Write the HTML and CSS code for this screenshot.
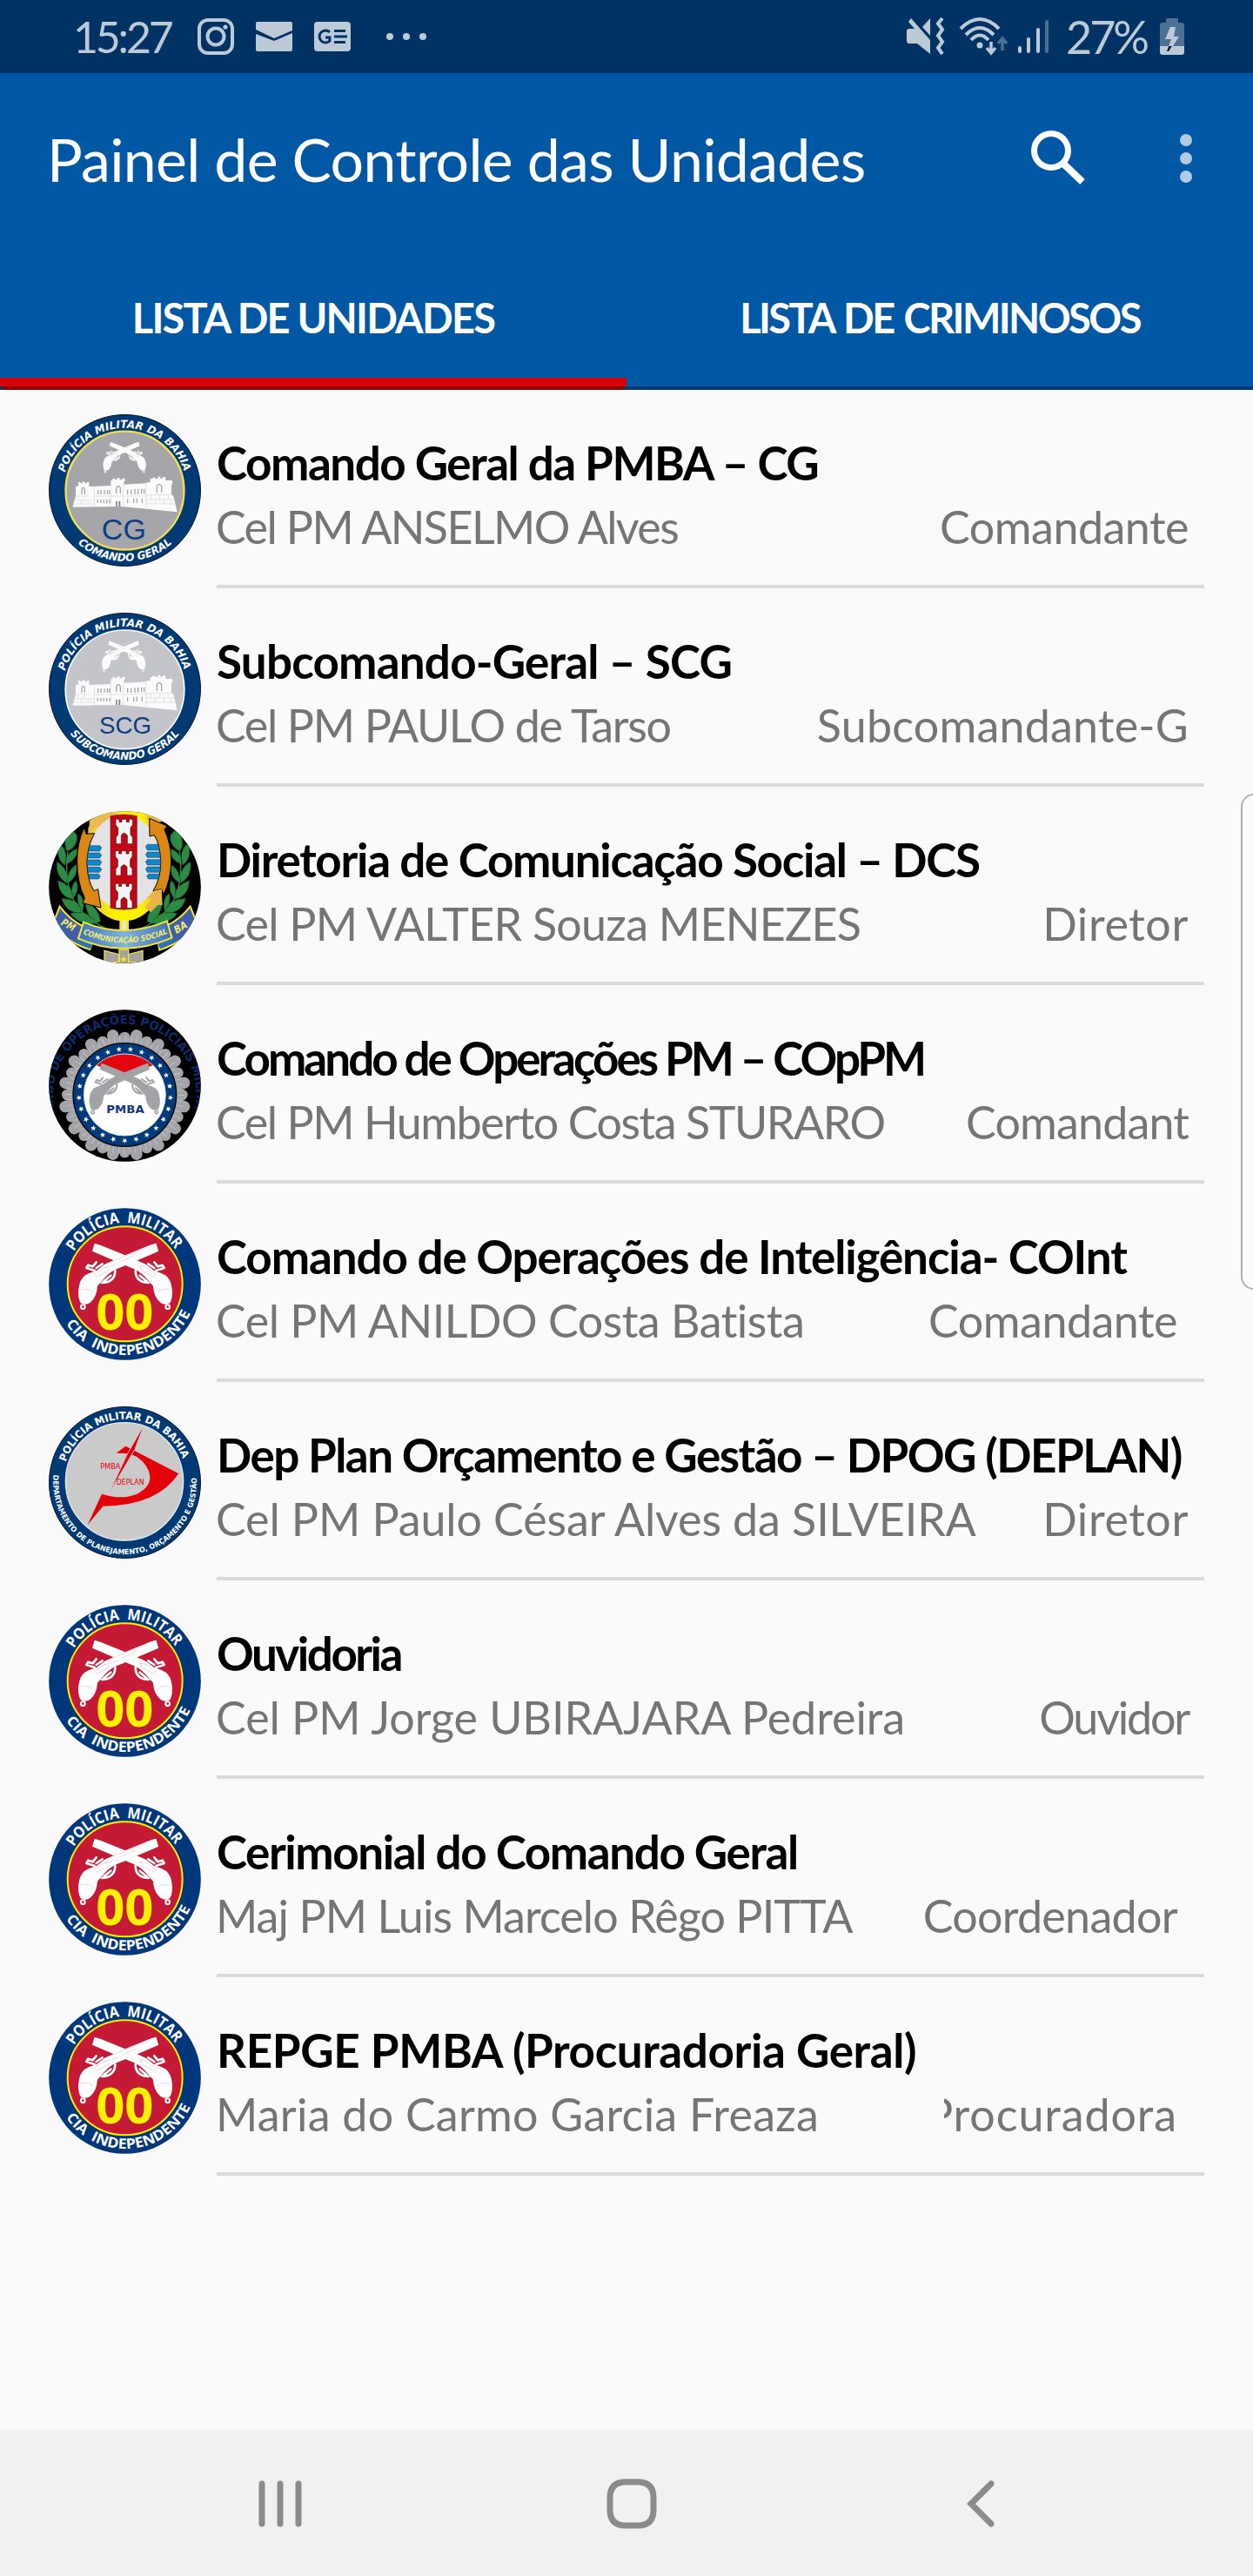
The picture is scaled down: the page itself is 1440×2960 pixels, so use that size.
FILE: index.html
```html
<!DOCTYPE html>
<html lang="pt-BR">
<head>
<meta charset="utf-8">
<title>Painel de Controle das Unidades</title>
<link rel="stylesheet" href="styles.css">
</head>
<body>
<svg class="defs" width="0" height="0" aria-hidden="true">
  <defs>
    <symbol id="pistols" viewBox="145 155 335 240" preserveAspectRatio="none">
      <g id="pistol">
        <path d="M418 161L426 188 303 241Q262 256 244 277L216 308Q214 345 191 365 176 376 158 367 147 345 151 318 154 286 172 272 190 262 212 256L240 234 300 207 396 168Z" fill="currentColor"/>
        <path d="M277 256Q276 296 231 297M262 272L238 292M206 255L178 246 184 236 200 241 212 226M212 246L233 232" fill="none" stroke="currentColor" stroke-width="8" stroke-linecap="round" stroke-linejoin="round"/>
        <circle cx="166" cy="380" r="7" fill="none" stroke="currentColor" stroke-width="6"/>
        <path class="engrave" d="M158 322Q185 312 201 332M205 268L214 276 250 258 262 240 240 245ZM262 224L384 176M300 222L350 200" fill="none" stroke-width="2"/>
      </g>
      <g transform="translate(624 0) scale(-1 1)">
        <path d="M418 161L426 188 303 241Q262 256 244 277L216 308Q214 345 191 365 176 376 158 367 147 345 151 318 154 286 172 272 190 262 212 256L240 234 300 207 396 168Z" fill="currentColor"/>
        <path d="M277 256Q276 296 231 297M262 272L238 292M206 255L178 246 184 236 200 241 212 226M212 246L233 232" fill="none" stroke="currentColor" stroke-width="8" stroke-linecap="round" stroke-linejoin="round"/>
        <circle cx="166" cy="380" r="7" fill="none" stroke="currentColor" stroke-width="6"/>
        <path class="engrave" d="M158 322Q185 312 201 332M205 268L214 276 250 258 262 240 240 245Z" fill="none" stroke-width="2"/>
      </g>
      <path d="M418 161L426 188 303 241 262 256 240 234 300 207 396 168Z" fill="currentColor"/>
      <path class="engrave" d="M262 224L384 176M300 222L350 200M240 245L262 240 290 230" fill="none" stroke-width="2"/>
    </symbol>

    <symbol id="castle" viewBox="125 260 370 130">
      <path d="M130 368L141 330V296H150V282H157V286H164V280H172V286H180V281H187V297H196L262 294V276H268V270H277V274H284V268H293V274H301V269H311V279H307V290L385 286V283H398V270H406V266H416V270H424V263H433V269H441V265H451V276H474V290H471V325L478 330 491 385 300 366Z" fill="#fbfbfb"/>
      <path d="M142 330H186M134 345H205M131 357H205M205 330H385M385 326H476M382 342H481M380 357H486M205 297V366M262 294V366M305 292V366M384 288V370M150 330V345M170 330V345M160 345V357M184 345V357M400 326V342M430 326V342M460 328V343M415 342V357M445 343V360M470 343V360" stroke="#cbc8cb" stroke-width="1.5" fill="none"/>
      <g fill="none" stroke="#a9a4ab" stroke-width="4">
        <path d="M162 324V306Q167 296 172 306V324M281 322V302Q288 290 295 302V322M421 318V296Q429 282 437 296V318"/>
        <path d="M218 324V310M228 324V310M240 324V310M250 324V310M257 324V310M320 324V308M332 324V308M345 324V306M356 324V306M368 322V305M377 322V305"/>
        <path d="M217 354V342M228 354V342M238 354V342M248 354V342M258 354V342M320 354V340M341 354V338M352 354V338M370 354V338"/>
      </g>
      <path d="M279 366V347H284V366M289 366V347H295V366" fill="#888490"/>
    </symbol>

    <symbol id="emblem-cg" viewBox="48 48 525 525">
      <circle cx="310.500" cy="310.500" r="261" fill="#003a75" stroke="#0a1320" stroke-width="3"/>
      <circle cx="310.500" cy="311" r="204" fill="#a5a5aa" stroke="#f5df4e" stroke-width="7"/>
      <path id="cg-top" d="M104 249A215 215 0 0 1 517 252" fill="none"/>
      <path id="cg-bottom" d="M148 493A244 244 0 0 0 478 488" fill="none"/>
      <text class="ring oblique" font-size="37"><textPath href="#cg-top" textLength="548" lengthAdjust="spacingAndGlyphs">POLÍCIA MILITAR DA BAHIA</textPath></text>
      <text class="ring oblique" font-size="37"><textPath href="#cg-bottom" textLength="356" lengthAdjust="spacingAndGlyphs">COMANDO GERAL</textPath></text>
      <use href="#pistols" x="233" y="141" width="153" height="112" color="#fff"/>
      <use href="#castle" x="125" y="260" width="370" height="130"/>
      <text class="code" x="307" y="480" font-size="102">CG</text>
    </symbol>

    <symbol id="emblem-scg" viewBox="48 42 525 525">
      <circle cx="310.500" cy="304.500" r="261" fill="#003a75" stroke="#0a1320" stroke-width="3"/>
      <circle cx="310.500" cy="307" r="205" fill="#c4c5ca" stroke="#fafafa" stroke-width="5"/>
      <path id="scg-top" d="M104 243A215 215 0 0 1 517 246" fill="none"/>
      <path id="scg-bottom" d="M122 460A245 245 0 0 0 505 453" fill="none"/>
      <text class="ring oblique" font-size="37"><textPath href="#scg-top" textLength="548" lengthAdjust="spacingAndGlyphs">POLÍCIA MILITAR DA BAHIA</textPath></text>
      <text class="ring oblique" font-size="37"><textPath href="#scg-bottom" textLength="430" lengthAdjust="spacingAndGlyphs">SUBCOMANDO GERAL</textPath></text>
      <use href="#pistols" x="229" y="137" width="155" height="112" color="#fff"/>
      <use href="#castle" x="125" y="254" width="370" height="130"/>
      <text class="code" x="312" y="460" font-size="83">SCG</text>
    </symbol>

    <clipPath id="dcs-clip"><circle cx="310.500" cy="313.500" r="262"/></clipPath>
    <linearGradient id="gold" x1="0" x2="1"><stop offset="0" stop-color="#e8b65c"/><stop offset=".4" stop-color="#fff200"/><stop offset=".7" stop-color="#fff200"/><stop offset="1" stop-color="#e8a440"/></linearGradient>
    <linearGradient id="ribbon" x1="0" x2="1"><stop offset="0" stop-color="#3c74b8"/><stop offset=".5" stop-color="#7fb2dc"/><stop offset="1" stop-color="#3c6fb5"/></linearGradient>
    <symbol id="tower" viewBox="0 0 60 88">
      <path d="M1 2H13V12H22V2H38V12H47V2H59V22L52 32V56L59 64V87H41V58Q30 42 20 58V87H2V64L9 56V32L1 22Z" fill="#f4f4f4" stroke="#36151a" stroke-width="2"/>
    </symbol>
    <symbol id="laurel" viewBox="60 90 190 370">
      <g fill="#2c8a45" stroke="#123d1c" stroke-width="1.500">
        <path d="M112 190Q92 160 120 115Q150 125 146 150Q140 178 112 190Z"/>
        <path d="M104 238Q70 215 82 160Q108 178 108 210ZM106 236Q105 195 146 180Q152 215 106 236Z"/>
        <path d="M110 300Q70 275 76 226Q108 245 112 275ZM112 300Q110 255 144 235Q150 280 112 300Z"/>
        <path d="M130 355Q82 345 80 290Q122 305 130 335ZM130 355Q120 310 142 290Q158 320 130 355Z"/>
        <path d="M160 402Q108 405 92 352Q145 355 160 385ZM162 402Q140 355 150 334Q180 360 162 402Z"/>
        <path d="M205 440Q150 442 122 404Q170 390 205 425ZM205 440Q170 390 176 362Q225 390 226 432Z"/>
      </g>
      <path d="M114 190Q95 330 165 400 205 440 245 455" fill="none" stroke="#2c8a45" stroke-width="4"/>
    </symbol>
    <symbol id="emblem-dcs" viewBox="48 51 525 525">
      <g clip-path="url(#dcs-clip)">
        <rect x="48" y="51" width="525" height="525"/>
        <use href="#laurel" x="60" y="90" width="190" height="370"/>
        <use href="#laurel" x="60" y="90" width="190" height="370" transform="translate(613 0) scale(-1 1)"/>
        <ellipse cx="307" cy="226" rx="150" ry="204" fill="url(#gold)"/>
        <path d="M184 86V138L150 152V90ZM392 76L455 92 452 130 400 118Z" fill="#000"/>
        <path d="M188 84V130L208 105 238 108 234 92 290 55H230ZM386 56L450 84 420 92 386 80Z" fill="#e9b950"/>
        <ellipse cx="306" cy="226" rx="127" ry="163" fill="#e3e3e6"/>
        <path d="M170 108L177 130 206 128Q181 170 180 230 181 290 204 326L218 320 228 384 165 368 172 350Q146 300 146 222 146 160 170 108Z" fill="#d98816" stroke="#000" stroke-width="3"/>
        <path d="M395 76L456 102 447 115Q470 165 470 222 470 285 444 338L437 320 408 326Q434 285 434 226 432 165 412 134L396 138Z" fill="#d98816" stroke="#000" stroke-width="3"/>
        <path d="M410 326L437 320 440 376 425 374 400 400 380 384 405 350 384 353Z" fill="#e9b44a"/>
        <path d="M261 68Q306 58 352 68V385Q306 396 261 385Z" fill="#c20613" stroke="#5b2126" stroke-width="2"/>
        <use href="#tower" x="278" y="77" width="60" height="88"/>
        <use href="#tower" x="277" y="186" width="60" height="88"/>
        <use href="#tower" x="277" y="297" width="60" height="91"/>
        <g fill="#0d87cc" stroke="#1c2b3a" stroke-width="1.500">
          <path d="M188 170H224L230 177 224 189H184ZM182 195H224L230 203 224 213H181ZM180 219H224L230 227 224 238H180ZM181 244H224L230 252 224 262H183ZM184 268H220L226 276 220 285H188Z"/>
          <path d="M425 166H388L382 174 388 186H430ZM432 192H388L382 200 388 211H433ZM434 218H388L382 226 388 237H434ZM433 243H388L382 251 388 262H432ZM430 268H392L386 276 392 285H427Z"/>
        </g>
        <path d="M292 428H324V470H292Z" fill="#f6e532"/><path d="M302 428H314V470H302Z" fill="#e8e8e8"/>
        <path d="M240 532L290 545V570L240 578ZM372 532L322 545V570L372 578Z" fill="#a5a2a2" stroke="#f6e532" stroke-width="4"/>
        <rect x="291" y="528" width="32" height="50" fill="#a5a2a2" stroke="#f6e532" stroke-width="4"/>
        <path d="M306 549L309 558H318L311 564 314 573 306 567 298 573 301 564 294 558H303Z" fill="#f6e532"/>
        <path d="M86 380Q120 425 166 448L150 490 196 510 190 528Q110 505 62 440ZM536 380Q500 425 456 445L472 485 426 508 430 530Q520 500 560 440Z" fill="#3f5fa8" stroke="#f6e532" stroke-width="6"/>
        <path d="M150 488L200 512 190 526 145 505ZM472 484L424 508 432 526 478 500Z" fill="#2d74bb"/>
        <path d="M168 434Q306 492 456 430L472 488Q306 560 150 490Z" fill="url(#ribbon)" stroke="#f6e532" stroke-width="6"/>
        <path id="dcs-band" d="M166 474Q310 538 464 470" fill="none"/>
        <text class="ring oblique gold" font-size="27"><textPath href="#dcs-band" textLength="302" lengthAdjust="spacingAndGlyphs">COMUNICAÇÃO SOCIAL</textPath></text>
        <text class="ring oblique gold" font-size="36" transform="translate(88 442) rotate(30) scale(.8 1)">PM</text>
        <text class="ring oblique gold" font-size="36" transform="translate(488 474) rotate(-30) scale(.85 1)">BA</text>
      </g>
    </symbol>

    <clipPath id="cop-clip"><circle cx="310.500" cy="307.500" r="262"/></clipPath>
    <symbol id="star" viewBox="-10 -10 20 20"><path d="M0-10L2.600-3.500 9.500-3.100 4.200 1.400 5.900 8.100 0 4.400-5.900 8.100-4.200 1.400-9.500-3.100-2.600-3.500Z" fill="#fff"/></symbol>
    <symbol id="emblem-coppm" viewBox="48 45 525 525">
      <g clip-path="url(#cop-clip)">
        <rect x="48" y="45" width="525" height="525"/>
        <path id="cop-ring" d="M70 400A247 247 0 1 1 550 400" fill="none"/>
        <text class="ring navy" font-size="42"><textPath href="#cop-ring" textLength="880" lengthAdjust="spacingAndGlyphs">ANDO DE OPERAÇÕES POLICIAIS MILITA</textPath></text>
        <g transform="translate(310 339)" stroke="#a4a4a8" stroke-linecap="round">
          <g stroke-width="38">
            <path d="M0-198V198"/><path d="M0-198V198" transform="rotate(22.500)"/><path d="M0-198V198" transform="rotate(45)"/><path d="M0-198V198" transform="rotate(67.500)"/><path d="M0-198V198" transform="rotate(90)"/><path d="M0-198V198" transform="rotate(112.500)"/><path d="M0-198V198" transform="rotate(135)"/><path d="M0-198V198" transform="rotate(157.500)"/>
          </g>
          <g stroke-width="40" transform="rotate(11.250)">
            <path d="M0-209V209"/><path d="M0-209V209" transform="rotate(22.500)"/><path d="M0-209V209" transform="rotate(45)"/><path d="M0-209V209" transform="rotate(67.500)"/><path d="M0-209V209" transform="rotate(90)"/><path d="M0-209V209" transform="rotate(112.500)"/><path d="M0-209V209" transform="rotate(135)"/><path d="M0-209V209" transform="rotate(157.500)"/>
          </g>
          <circle r="194" fill="none" stroke="#cfcfd2" stroke-width="24" stroke-dasharray="2 17.045" stroke-linecap="butt"/>
        </g>
        <circle cx="310" cy="339" r="178" fill="#003a78" stroke="#000" stroke-width="4"/>
        <circle cx="310" cy="339" r="141" fill="#fff" stroke="#cfe0ee" stroke-width="3"/>
        <path d="M213 238A141 141 0 0 1 407 238L310 270Z" fill="#e3060f"/>
        <g transform="translate(310 339) rotate(7.200)">
          <g id="stars">
            <use href="#star" x="-10" y="-168" width="20" height="20"/><use href="#star" x="-10" y="-168" width="20" height="20" transform="rotate(14.400)"/><use href="#star" x="-10" y="-168" width="20" height="20" transform="rotate(28.800)"/><use href="#star" x="-10" y="-168" width="20" height="20" transform="rotate(43.200)"/><use href="#star" x="-10" y="-168" width="20" height="20" transform="rotate(57.600)"/>
          </g>
          <use href="#stars" transform="rotate(72)"/><use href="#stars" transform="rotate(144)"/><use href="#stars" transform="rotate(216)"/><use href="#stars" transform="rotate(288)"/>
        </g>
        <use href="#pistols" x="184" y="226" width="252" height="184" color="#a4a4a8"/>
        <text class="ring blue" x="247" y="401" font-size="38" textLength="130" lengthAdjust="spacingAndGlyphs">PMBA</text>
      </g>
    </symbol>

    <symbol id="emblem-cia" viewBox="48 39 525 525">
      <circle cx="310.500" cy="301.500" r="262" fill="#00367a"/>
      <circle cx="311" cy="301" r="198" fill="#c51a35" stroke="#fdf000" stroke-width="6"/>
      <path id="cia-top" d="M135 190A207 207 0 0 1 488 188" fill="none"/>
      <path id="cia-bottom" d="M107 438A247 247 0 0 0 538 398" fill="none"/>
      <text class="ring open" font-size="53"><textPath href="#cia-top" textLength="416" lengthAdjust="spacingAndGlyphs">POLÍCIA&#160; MILITAR</textPath></text>
      <text class="ring open" font-size="49"><textPath href="#cia-bottom" textLength="524" lengthAdjust="spacingAndGlyphs">CIA&#160; INDEPENDENTE</textPath></text>
      <use href="#pistols" x="145" y="155" width="335" height="240" color="#fff"/>
      <text class="zeros" x="310" y="458" font-size="174">00</text>
    </symbol>

    <symbol id="emblem-deplan" viewBox="48 48 525 525">
      <circle cx="310.500" cy="310.500" r="261" fill="#003a75" stroke="#0a1320" stroke-width="3"/>
      <circle cx="309" cy="307" r="203" fill="#cacaca" stroke="#e4ebf2" stroke-width="4"/>
      <path id="dep-top" d="M107 240A214 214 0 0 1 513 237" fill="none"/>
      <path id="dep-bottom" d="M65 284A247 247 0 1 0 556 284" fill="none"/>
      <text class="ring" font-size="36"><textPath href="#dep-top" textLength="526" lengthAdjust="spacingAndGlyphs">POLÍCIA MILITAR DA BAHIA</textPath></text>
      <text class="ring" font-size="25"><textPath href="#dep-bottom" textLength="820" lengthAdjust="spacingAndGlyphs">DEPARTAMENTO DE PLANEJAMENTO, ORÇAMENTO E GESTÃO</textPath></text>
      <g fill="#e2000b">
        <path d="M281 209L313 185 496 280Q420 392 235 392L182 457 231 350Q300 372 352 350 400 326 397 288 392 250 352 222 330 208 281 209Z"/>
        <path d="M372 121L345 196 254 352 318 214Z" stroke="#cacaca" stroke-width="3"/>
        <path d="M371 123L343 196 320 214 334 192Z"/>
        <text class="small" x="226" y="263" font-size="25" textLength="69" lengthAdjust="spacingAndGlyphs">PMBA</text>
        <text class="small" x="281" y="319" font-size="25" textLength="96" lengthAdjust="spacingAndGlyphs">DEPLAN</text>
      </g>
    </symbol>
  </defs>
</svg>

<main class="screen">
  <header>
    <div class="status">
      <div class="status-left">
        <span class="clock">15:27</span>
        <svg width="42" height="42" viewBox="0 0 42 42" fill="none" stroke="currentColor"><rect x="2" y="2" width="38" height="38" rx="10" stroke-width="4"/><circle cx="21" cy="21" r="9.500" stroke-width="4"/><circle cx="32" cy="10" r="2.600" fill="currentColor" stroke="none"/></svg>
        <svg width="42" height="34" viewBox="0 0 42 34" fill="currentColor"><path d="M2 0H40Q42 0 42 2V10L21 19 0 9V2Q0 0 2 0ZM0 14L21 22 42 13V32Q42 34 40 34H2Q0 34 0 32Z"/></svg>
        <svg width="42" height="34" viewBox="0 0 42 34"><rect width="42" height="34" rx="4" fill="currentColor"/><path d="M18 12A7 7 0 1 0 18 22V18H13M23 10.500H36M23 17H38M23 23.500H36" fill="none" stroke="#003263" stroke-width="3"/></svg>
        <svg class="dots" width="48" height="10" viewBox="0 0 48 10" fill="currentColor"><circle cx="5" cy="5" r="4"/><circle cx="24" cy="5" r="4"/><circle cx="43" cy="5" r="4"/></svg>
      </div>
      <div class="status-right">
        <svg width="44" height="44" viewBox="0 0 44 44"><path d="M0 16Q0 13 3 13H9L2 5 5 1 27 26V42L12 30H3Q0 30 0 27ZM18 11L27 1V21Z" fill="currentColor"/><path d="M41 1L36 7 41 14 36 21 41 28 36 35 41 42" fill="none" stroke="currentColor" stroke-width="4"/></svg>
        <svg width="58" height="44" viewBox="0 0 58 44" fill="none" stroke="currentColor" stroke-width="4"><path d="M2 13Q24-9 46 13M8 20Q24 4 40 20M14 26Q24 15 34 26"/><circle cx="24" cy="32" r="3.500" fill="currentColor" stroke="none"/><path d="M37 28V40M32 35L37 41 42 35" stroke-width="3.500"/><path d="M50 38V26M45 30L50 24 55 30" stroke-width="3.500" opacity=".4"/></svg>
        <svg width="38" height="42" viewBox="0 0 38 42" stroke="currentColor" stroke-width="4" stroke-linecap="round"><path d="M3 34V38M13 24V38M24 13V38"/><path d="M34 4V38" opacity=".4"/></svg>
        <span class="percent">27%</span>
        <svg width="28" height="44" viewBox="0 0 28 44"><path d="M7 6V2Q7 1 8 1H20Q21 1 21 2V6H25Q28 6 28 9V33H0V9Q0 6 3 6Z" fill="#4d7093"/><path d="M0 33H28V40Q28 43 25 43H3Q0 43 0 40Z" fill="currentColor"/><path d="M12 11H18L16 22H22L13 36H9L13 25H6Z" fill="currentColor"/><path d="M10 33H14L10 39H8Z" fill="#082038"/></svg>
      </div>
    </div>
    <div class="appbar">
      <h1>Painel de Controle das Unidades</h1>
      <svg class="search" width="64" height="64" viewBox="0 0 64 64" fill="none" stroke="#fff"><circle cx="24" cy="24" r="19.500" stroke-width="7"/><path d="M37 38L60 60" stroke-width="8"/></svg>
      <svg class="more" width="14" height="58" viewBox="0 0 14 58" fill="#b3cae3"><circle cx="7" cy="8" r="7"/><circle cx="7" cy="29" r="7"/><circle cx="7" cy="50" r="7"/></svg>
    </div>
    <nav class="tabs">
      <a class="tab active">LISTA DE UNIDADES</a>
      <a class="tab criminals">LISTA DE CRIMINOSOS</a>
    </nav>
  </header>

  <ul class="units">
    <li><svg class="avatar"><use href="#emblem-cg"/></svg><div class="body"><h2>Comando Geral da PMBA – CG</h2><p><span class="chief">Cel PM ANSELMO Alves</span><span class="role comandante">Comandante</span></p></div></li>
    <li><svg class="avatar"><use href="#emblem-scg"/></svg><div class="body"><h2>Subcomando-Geral – SCG</h2><p><span class="chief">Cel PM PAULO de Tarso</span><span class="role sub">Subcomandante-G</span></p></div></li>
    <li><svg class="avatar"><use href="#emblem-dcs"/></svg><div class="body"><h2>Diretoria de Comunicação Social – DCS</h2><p><span class="chief">Cel PM VALTER Souza MENEZES</span><span class="role diretor">Diretor</span></p></div></li>
    <li><svg class="avatar"><use href="#emblem-coppm"/></svg><div class="body"><h2>Comando de Operações PM – COpPM</h2><p><span class="chief">Cel PM Humberto Costa STURARO</span><span class="role comandant">Comandant</span></p></div></li>
    <li><svg class="avatar"><use href="#emblem-cia"/></svg><div class="body"><h2>Comando de Operações de Inteligência- COInt</h2><p><span class="chief">Cel PM ANILDO Costa Batista</span><span class="role comandante inset">Comandante</span></p></div></li>
    <li><svg class="avatar"><use href="#emblem-deplan"/></svg><div class="body"><h2>Dep Plan Orçamento e Gestão – DPOG (DEPLAN)</h2><p><span class="chief">Cel PM Paulo César Alves da SILVEIRA</span><span class="role diretor">Diretor</span></p></div></li>
    <li><svg class="avatar"><use href="#emblem-cia"/></svg><div class="body"><h2>Ouvidoria</h2><p><span class="chief">Cel PM Jorge UBIRAJARA Pedreira</span><span class="role ouvidor">Ouvidor</span></p></div></li>
    <li><svg class="avatar"><use href="#emblem-cia"/></svg><div class="body"><h2>Cerimonial do Comando Geral</h2><p><span class="chief">Maj PM Luis Marcelo Rêgo PITTA</span><span class="role coordenador inset">Coordenador</span></p></div></li>
    <li><svg class="avatar"><use href="#emblem-cia"/></svg><div class="body"><h2>REPGE PMBA (Procuradoria Geral)</h2><p><span class="chief">Maria do Carmo Garcia Freaza</span><span class="role procuradora inset">Procuradora</span></p></div></li>
  </ul>

  <div class="edge-panel"></div>

  <footer class="navbar">
    <svg width="50" height="58" viewBox="0 0 50 58" stroke="#8b8b8b" stroke-width="7" stroke-linecap="round"><path d="M4 6V52M25 6V52M46 6V52"/></svg>
    <svg class="home" width="58" height="58" viewBox="0 0 58 58" fill="none" stroke="#8b8b8b" stroke-width="7"><path d="M22 4H36Q54 4 54 22V36Q54 54 36 54H22Q4 54 4 36V22Q4 4 22 4Z"/></svg>
    <svg width="32" height="58" viewBox="0 0 32 58" fill="none" stroke="#8b8b8b" stroke-width="7" stroke-linecap="round"><path d="M28 6L5 29 28 52"/></svg>
  </footer>
</main>
</body>
</html>
```
FILE: styles.css
```css
* { box-sizing: border-box; }
body { margin: 0; background: #fafafa; font-family: Lato, "Open Sans", sans-serif; }
h1, h2, p, ul { margin: 0; padding: 0; font-weight: 400; }
svg { display: block; flex: none; }
.defs { position: absolute; }

.screen { position: relative; width: 1440px; height: 2960px; display: flex; flex-direction: column; overflow: hidden; }

/* status bar */
.status { height: 84px; background: #003263; color: #bccad8; display: flex; justify-content: space-between; align-items: center; padding: 0 79px 0 84px; }
.status-left, .status-right { display: flex; align-items: center; }
.status-left { gap: 25px; }
.status-left .dots { margin-left: 15px; }
.clock { width: 118px; font-size: 50px; letter-spacing: -3.2px; line-height: 80px; white-space: nowrap; }
.percent { width: 96px; margin: 0 12px 0 18px; font-size: 52px; letter-spacing: -3px; line-height: 80px; }
.status-right svg:nth-child(2) { margin: 0 9px 0 16px; }

/* app bar */
header { height: 448px; background: #0057a4; color: #fff; border-bottom: 4px solid #003a6e; flex: none; }
.appbar { height: 208px; display: flex; align-items: flex-start; padding: 58px 70px 0 54px; }
h1 { width: 1130px; font-size: 68px; line-height: 82px; letter-spacing: -0.7px; white-space: nowrap; }
.search { margin-top: 7px; }
.more { margin: 11px 0 0 auto; }
.tabs { display: flex; height: 156px; }
.tab { width: 720px; padding-top: 45px; text-align: center; font-size: 47px; font-weight: 700; line-height: 56px; letter-spacing: -1.78px; }
.criminals { letter-spacing: -2.6px; word-spacing: 3px; }
.active { background: linear-gradient(#d70000 10px, #940000 10px) bottom / 100% 14px no-repeat; border-radius: 0 0 8px 8px; }

/* unit list */
.units { list-style: none; flex: 1; }
.units li { height: 228px; display: flex; align-items: flex-start; padding-left: 56px; }
.avatar { width: 175px; height: 175px; margin-top: 28px; }
.body { width: 1135px; height: 228px; margin-left: 18px; padding-top: 52px; border-bottom: 4px solid #dbdbdb; }
h2 { font-size: 53px; font-weight: 700; line-height: 64px; color: #000; white-space: nowrap; }
.body p { display: flex; justify-content: space-between; height: 56px; margin: 14px 0 0 -1px; padding-right: 18px; font-size: 52px; line-height: 54px; color: #757575; white-space: nowrap; }
.role { display: flex; justify-content: flex-end; }
.inset { margin-right: 13px; }

/* tracking per entry */
li:nth-child(1) h2 { letter-spacing: -1.48px; }
li:nth-child(2) h2 { letter-spacing: -0.8px; }
li:nth-child(3) h2 { letter-spacing: -1.3px; }
li:nth-child(4) h2 { letter-spacing: -3px; }
li:nth-child(5) h2 { letter-spacing: -1.13px; }
li:nth-child(6) h2 { letter-spacing: -1.55px; }
li:nth-child(7) h2 { letter-spacing: -2.5px; }
li:nth-child(8) h2 { letter-spacing: -1.42px; }
li:nth-child(9) h2 { letter-spacing: -0.4px; }
li:nth-child(1) .chief { letter-spacing: -1.6px; }
li:nth-child(2) .chief { letter-spacing: -1.35px; }
li:nth-child(3) .chief { letter-spacing: -0.73px; }
li:nth-child(4) .chief { letter-spacing: -1.45px; }
li:nth-child(5) .chief { letter-spacing: -0.5px; }
li:nth-child(6) .chief { letter-spacing: -0.1px; }
li:nth-child(7) .chief { letter-spacing: -0.05px; }
li:nth-child(8) .chief { letter-spacing: -0.92px; }
li:nth-child(9) .chief { letter-spacing: 0.23px; }
.comandante { letter-spacing: -0.5px; }
.sub { letter-spacing: 0.2px; }
.diretor { letter-spacing: 0.6px; }
.comandant { letter-spacing: -0.85px; }
.ouvidor { letter-spacing: -2.2px; }
.coordenador { letter-spacing: -0.7px; }
.procuradora { width: 268px; overflow: hidden; letter-spacing: 0.9px; }

/* emblem lettering */
.ring { font-family: "DejaVu Sans", sans-serif; font-weight: 700; fill: #fff; }
.oblique { font-style: oblique; }
.open { font-family: "Open Sans", sans-serif; }
.gold { fill: #f6e96a; }
.navy { fill: #0e2a6c; }
.blue { fill: #0b377a; }
.code { font-family: "Liberation Sans", sans-serif; fill: #0b3f80; text-anchor: middle; }
.zeros { font-family: "Open Sans", sans-serif; font-weight: 700; fill: #fff100; text-anchor: middle; }
.small { font-family: "DejaVu Sans", sans-serif; }
.engrave { stroke: rgba(160, 90, 110, .35); }

/* edge panel handle, floating over the list */
.edge-panel { position: absolute; left: 1426px; top: 912px; width: 30px; height: 570px; border: 2px solid #b0b0b0; border-radius: 20px; background: #fcfcfc; }

.navbar { height: 168px; background: #f1f1f1; display: flex; justify-content: space-between; align-items: center; padding: 2px 297px 0 297px; flex: none; }
.home { margin-right: 6px; }
```
